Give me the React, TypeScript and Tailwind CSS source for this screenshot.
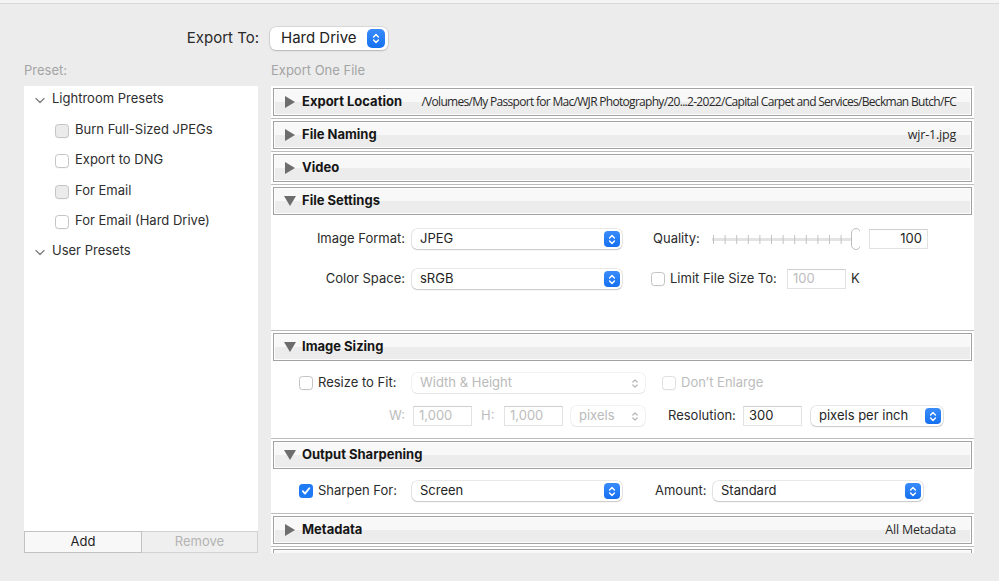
import React from 'react';

function Stepper({ size = 'sm', disabled = false }: { size?: 'sm' | 'lg'; disabled?: boolean }) {
  if (disabled) {
    return (
      <span className="w-[16px] h-[16px] flex items-center justify-center">
        <svg width="8" height="11" viewBox="0 0 8 11">
          <path d="M1.8 4 L4 1.8 L6.2 4 M1.8 7 L4 9.2 L6.2 7" stroke="#b4b4b4" strokeWidth="1.2" fill="none" strokeLinecap="round" strokeLinejoin="round" />
        </svg>
      </span>
    );
  }
  return (
    <span
      className={`${size === 'lg' ? 'w-[18px] h-[19px] rounded-[5px]' : 'w-[16px] h-[16px] rounded-[4px]'} bg-[linear-gradient(to_bottom,#3a8cfa,#1570f0)] flex items-center justify-center`}
    >
      <svg width="8" height="11" viewBox="0 0 8 11">
        <path d="M1.6 4 L4 1.6 L6.4 4 M1.6 7 L4 9.4 L6.4 7" stroke="white" strokeWidth="1.4" fill="none" strokeLinecap="round" strokeLinejoin="round" />
      </svg>
    </span>
  );
}

function Select({ value, w, disabled = false }: { value: string; w: string; disabled?: boolean }) {
  return (
    <div
      className={`${w} h-[20px] shrink-0 rounded-[5px] bg-white flex items-center pl-[8px] pr-[2px] ${
        disabled
          ? 'shadow-[0_0_0_0.5px_rgba(0,0,0,0.1),0_1px_1px_rgba(0,0,0,0.05)]'
          : 'shadow-[0_0_0_0.5px_rgba(0,0,0,0.18),0_1px_1.5px_rgba(0,0,0,0.14)]'
      }`}
    >
      <span className={`flex-1 text-[13px] ${disabled ? 'text-[#bababa]' : 'text-[#242424]'}`}>{value}</span>
      <Stepper disabled={disabled} />
    </div>
  );
}

function Field({ value, w, disabled = false, right = false }: { value: string; w: string; disabled?: boolean; right?: boolean }) {
  return (
    <div
      className={`${w} h-[20px] shrink-0 bg-white border border-[#e2e2e2] border-t-[#cfcfcf] flex items-center px-[5px] text-[13px] ${
        right ? 'justify-end' : ''
      } ${disabled ? 'text-[#bdbdbd]' : 'text-[#242424]'}`}
    >
      {value}
    </div>
  );
}

function Check({ checked = false, filled = false, disabled = false }: { checked?: boolean; filled?: boolean; disabled?: boolean }) {
  if (checked) {
    return (
      <span className="block w-[14px] h-[14px] shrink-0 rounded-[3.5px] bg-[#1f7bf5] flex items-center justify-center">
        <svg width="10" height="10" viewBox="0 0 10 10">
          <path d="M1.8 5.2 L4 7.6 L8.3 2.2" stroke="white" strokeWidth="1.8" fill="none" strokeLinecap="round" strokeLinejoin="round" />
        </svg>
      </span>
    );
  }
  return (
    <span
      className={`block w-[14px] h-[14px] shrink-0 rounded-[3.5px] border ${
        disabled ? 'border-[#e0e0e0]' : 'border-[#c4c4c4]'
      } ${filled ? 'bg-[#ebebeb]' : 'bg-white'} shadow-[0_0.5px_0.5px_rgba(0,0,0,0.06)]`}
    />
  );
}

function Triangle({ open }: { open: boolean }) {
  return open ? (
    <svg width="12" height="10" viewBox="0 0 12 10" className="shrink-0">
      <path d="M0 0 L12 0 L6 10 Z" fill="#6d6d6d" />
    </svg>
  ) : (
    <svg width="10" height="12" viewBox="0 0 10 12" className="shrink-0 ml-[1px] mr-[1px]">
      <path d="M0 0 L10 6 L0 12 Z" fill="#6d6d6d" />
    </svg>
  );
}

function Section({
  title,
  open = false,
  right,
  path = false,
  children,
}: {
  title: string;
  open?: boolean;
  right?: string;
  path?: boolean;
  children?: React.ReactNode;
}) {
  return (
    <div>
      <div className="mx-[2px] h-[28px] border border-[#a2a2a2] shadow-[inset_0_0_0_1px_#fdfdfd] bg-[linear-gradient(to_bottom,#f8f8f8_50%,#ececec_50%)] flex items-center pl-[10px] pr-[15px]">
        <Triangle open={open} />
        {title && <span className="ml-[6px] text-[13px] font-bold text-[#161616] whitespace-nowrap">{title}</span>}
        {right && (
          <span
            className={`ml-auto whitespace-nowrap text-[#2a2a2a] font-['Open_Sans',sans-serif] ${
              path ? 'text-[12px] tracking-[-0.7px]' : 'text-[12.5px] tracking-[-0.2px]'
            }`}
          >
            {right}
          </span>
        )}
      </div>
      {children}
      <div className="h-[5px] pt-[2px]">
        <div className="h-px bg-[#bcbcbc]" />
      </div>
    </div>
  );
}

function Slider() {
  const ticks = Array.from({ length: 13 }, (_, i) => 1 + i * 11.6);
  return (
    <svg width="148" height="22" viewBox="0 0 148 22" className="shrink-0">
      <rect x="0" y="10" width="141" height="3" fill="#e3e3e3" />
      {ticks.map((x) => (
        <rect key={x} x={x} y="7" width="1" height="9" fill="#c2c2c2" />
      ))}
      <rect x="139.5" y="0.5" width="9" height="21" rx="4.5" fill="white" stroke="#bdbdbd" />
    </svg>
  );
}

const presets = [
  { name: 'Burn Full-Sized JPEGs', filled: true },
  { name: 'Export to DNG', filled: false },
  { name: 'For Email', filled: true },
  { name: 'For Email (Hard Drive)', filled: false },
];

function Chevron() {
  return (
    <svg width="10" height="7" viewBox="0 0 10 7" className="mt-[4px] shrink-0">
      <path d="M1 1.5 L5 5.5 L9 1.5" stroke="#7a7a7a" strokeWidth="1.2" fill="none" strokeLinecap="round" strokeLinejoin="round" />
    </svg>
  );
}

export default function App() {
  return (
    <div className="w-[999px] h-[581px] overflow-hidden bg-[#ececec] font-[Inter,sans-serif] text-[#2b2b2b] flex flex-col">
      <div className="h-[4px] bg-[#f4f4f4] border-b border-[#d9d9d9]" />

      {/* Export To */}
      <div className="mt-[23px] h-[23px] flex items-center">
        <span className="w-[259px] text-right text-[15px] text-[#2a2a2a]">Export To:</span>
        <div className="ml-[11px] w-[118px] h-[23px] rounded-[6px] bg-white shadow-[0_0_0_0.5px_rgba(0,0,0,0.16),0_1px_2px_rgba(0,0,0,0.16)] flex items-center pl-[11px] pr-[3px]">
          <span className="flex-1 text-[15px] text-[#222]">Hard Drive</span>
          <Stepper size="lg" />
        </div>
      </div>

      <div className="mt-[13px] h-[16px] flex items-center text-[13px] text-[#a4a4a4]">
        <span className="w-[271px] pl-[24px]">Preset:</span>
        <span>Export One File</span>
      </div>

      <div className="mt-[7px] h-[467px] flex">
        {/* Presets */}
        <div className="ml-[24px] w-[234px] flex flex-col">
          <div className="flex-1 bg-white">
            <div className="-mt-[3px]">
              <div className="h-[30.5px] flex items-center pl-[11px] gap-[7px] text-[13px] text-[#2e2e2e]">
                <Chevron />
                <span>Lightroom Presets</span>
              </div>
              {presets.map((p) => (
                <div key={p.name} className="h-[30.5px] flex items-center pl-[31px] text-[13px] text-[#2e2e2e]">
                  <span className="mt-[4px]">
                    <Check filled={p.filled} />
                  </span>
                  <span className="ml-[6px] mt-[1px]">{p.name}</span>
                </div>
              ))}
              <div className="h-[30.5px] flex items-center pl-[11px] gap-[7px] text-[13px] text-[#2e2e2e]">
                <Chevron />
                <span>User Presets</span>
              </div>
            </div>
          </div>
          <div className="h-[22px] flex text-[13px]">
            <div className="w-[118px] border border-[#c2c2c2] bg-[#f8f8f8] flex items-center justify-center text-[#1e1e1e]">Add</div>
            <div className="flex-1 border border-l-0 border-[#d2d2d2] bg-[#efefef] flex items-center justify-center text-[#b3b3b3]">
              Remove
            </div>
          </div>
        </div>

        {/* Export settings */}
        <div className="ml-[13px] w-[703px] bg-white overflow-hidden pt-[2px]">
          <Section
            title="Export Location"
            right="/Volumes/My Passport for Mac/WJR Photography/20...2-2022/Capital Carpet and Services/Beckman Butch/FC"
            path
          />
          <Section title="File Naming" right="wjr-1.jpg" />
          <Section title="Video" />
          <Section title="File Settings" open>
            <div className="h-[113px] pt-[14px] flex flex-col gap-[20px] text-[13px]">
              <div className="h-[20px] flex items-center">
                <span className="w-[134px] text-right">Image Format:</span>
                <div className="ml-[7px]">
                  <Select value="JPEG" w="w-[210px]" />
                </div>
                <span className="ml-[31px] w-[52px]">Quality:</span>
                <div className="ml-[7px]">
                  <Slider />
                </div>
                <div className="ml-[9px]">
                  <Field value="100" w="w-[59px]" right />
                </div>
              </div>
              <div className="h-[20px] flex items-center">
                <span className="w-[134px] text-right">Color Space:</span>
                <div className="ml-[7px]">
                  <Select value="sRGB" w="w-[210px]" />
                </div>
                <span className="ml-[29px]">
                  <Check />
                </span>
                <span className="ml-[5px] w-[112px] whitespace-nowrap">Limit File Size To:</span>
                <div className="ml-[5px]">
                  <Field value="100" w="w-[59px]" disabled />
                </div>
                <span className="ml-[5px]">K</span>
              </div>
            </div>
          </Section>
          <Section title="Image Sizing" open>
            <div className="h-[75px] pt-[12px] flex flex-col gap-[13px] text-[13px]">
              <div className="h-[20px] flex items-center">
                <div className="w-[134px] flex items-center pl-[28px]">
                  <Check />
                  <span className="ml-[5px]">Resize to Fit:</span>
                </div>
                <div className="ml-[7px]">
                  <Select value="Width & Height" w="w-[233px]" disabled />
                </div>
                <span className="ml-[17px]">
                  <Check disabled />
                </span>
                <span className="ml-[5px] text-[#bcbcbc]">Don’t Enlarge</span>
              </div>
              <div className="h-[20px] flex items-center">
                <span className="w-[134px] text-right text-[#bcbcbc]">W:</span>
                <div className="ml-[8px]">
                  <Field value="1,000" w="w-[59px]" disabled />
                </div>
                <span className="ml-[9px] w-[23px] text-[#bcbcbc]">H:</span>
                <Field value="1,000" w="w-[59px]" disabled />
                <div className="ml-[8px]">
                  <Select value="pixels" w="w-[74px]" disabled />
                </div>
                <span className="ml-[23px] w-[68px]">Resolution:</span>
                <div className="ml-[7px]">
                  <Field value="300" w="w-[59px]" />
                </div>
                <div className="ml-[9px]">
                  <Select value="pixels per inch" w="w-[132px]" />
                </div>
              </div>
            </div>
          </Section>
          <Section title="Output Sharpening" open>
            <div className="h-[42px] pt-[12px] text-[13px]">
              <div className="h-[20px] flex items-center">
                <div className="w-[134px] flex items-center pl-[28px]">
                  <Check checked />
                  <span className="ml-[5px]">Sharpen For:</span>
                </div>
                <div className="ml-[7px]">
                  <Select value="Screen" w="w-[210px]" />
                </div>
                <span className="ml-[33px] w-[51px]">Amount:</span>
                <div className="ml-[7px]">
                  <Select value="Standard" w="w-[210px]" />
                </div>
              </div>
            </div>
          </Section>
          <Section title="Metadata" right="All Metadata" />
          <Section title="" />
        </div>
      </div>
    </div>
  );
}
